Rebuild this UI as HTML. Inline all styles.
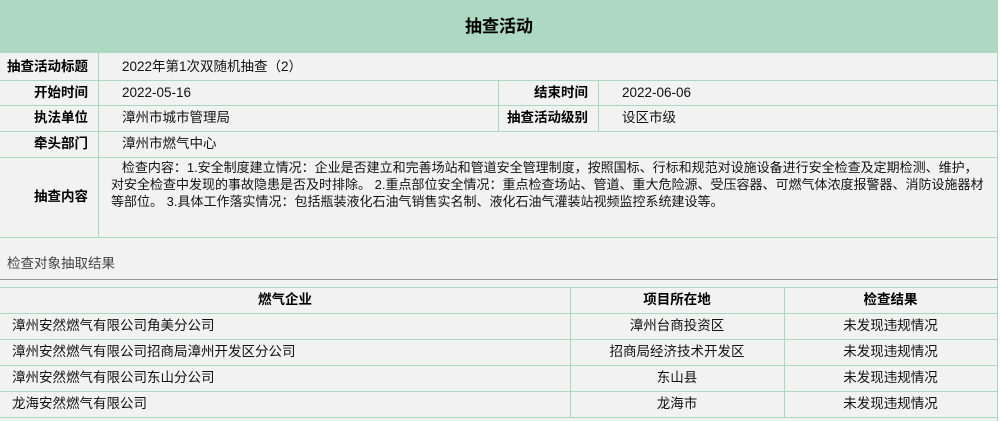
<!DOCTYPE html><html><head><meta charset="utf-8"><style>
body{margin:0;width:1001px;height:421px;background:#fff;font-family:"Liberation Sans","Noto Sans CJK SC",sans-serif;font-size:13.5px;color:#111;position:relative;overflow:hidden}
.bg{position:absolute;left:0;top:0;width:998px;height:421px;background:#f2f2f2}
.hd{position:absolute;left:0;top:0;width:998px;height:53px;background:#add9c2;text-align:center;line-height:53px;font-size:17px;font-weight:bold;color:#000}
.h{position:absolute;background:#a9d8bd;height:1px}
.v{position:absolute;background:#a9d8bd;width:1px}
.t{position:absolute;white-space:nowrap;line-height:26px}
.b{font-weight:bold;color:#000}
</style></head><body>
<div class="bg"></div>
<div class="hd">抽查活动</div>
<div class="h" style="left:0;top:80px;width:998px"></div>
<div class="h" style="left:0;top:105px;width:998px"></div>
<div class="h" style="left:0;top:131px;width:998px"></div>
<div class="h" style="left:0;top:157px;width:998px"></div>
<div class="h" style="left:0;top:237px;width:998px"></div>
<div class="v" style="left:98px;top:53px;height:184px"></div>
<div class="v" style="left:498px;top:80px;height:51px"></div>
<div class="v" style="left:598px;top:80px;height:51px"></div>
<div class="v" style="left:997px;top:53px;height:368px"></div>
<div class="t b" style="left:0;width:88px;text-align:right;top:54px">抽查活动标题</div>
<div class="t" style="left:122px;top:54px">2022年第1次双随机抽查（2）</div>
<div class="t b" style="left:0;width:88px;text-align:right;top:80px">开始时间</div>
<div class="t" style="left:122px;top:80px">2022-05-16</div>
<div class="t b" style="left:498px;width:90px;text-align:right;top:80px">结束时间</div>
<div class="t" style="left:622px;top:80px">2022-06-06</div>
<div class="t b" style="left:0;width:88px;text-align:right;top:105px">执法单位</div>
<div class="t" style="left:122px;top:105px">漳州市城市管理局</div>
<div class="t b" style="left:498px;width:90px;text-align:right;top:105px">抽查活动级别</div>
<div class="t" style="left:622px;top:105px">设区市级</div>
<div class="t b" style="left:0;width:88px;text-align:right;top:131px">牵头部门</div>
<div class="t" style="left:122px;top:131px">漳州市燃气中心</div>
<div class="t b" style="left:0;width:88px;text-align:right;top:184px">抽查内容</div>
<div style="position:absolute;left:111px;top:159px;white-space:nowrap;line-height:17px;font-size:13px">&nbsp;&nbsp;&nbsp;检查内容：1.安全制度建立情况：企业是否建立和完善场站和管道安全管理制度，按照国标、行标和规范对设施设备进行安全检查及定期检测、维护，<br>对安全检查中发现的事故隐患是否及时排除。 2.重点部位安全情况：重点检查场站、管道、重大危险源、受压容器、可燃气体浓度报警器、消防设施器材<br>等部位。 3.具体工作落实情况：包括瓶装液化石油气销售实名制、液化石油气灌装站视频监控系统建设等。</div>
<div class="t" style="left:7px;top:251px;color:#444">检查对象抽取结果</div>
<div style="position:absolute;left:0;top:279px;width:998px;height:1px;background:#999"></div>
<div class="h" style="left:0;top:287px;width:998px"></div>
<div class="h" style="left:0;top:313px;width:998px"></div>
<div class="h" style="left:0;top:339px;width:998px"></div>
<div class="h" style="left:0;top:365px;width:998px"></div>
<div class="h" style="left:0;top:391px;width:998px"></div>
<div class="h" style="left:0;top:417px;width:998px"></div>
<div class="v" style="left:570px;top:287px;height:130px"></div>
<div class="v" style="left:784px;top:287px;height:130px"></div>
<div class="t b" style="left:0;width:570px;text-align:center;top:287px">燃气企业</div>
<div class="t b" style="left:570px;width:214px;text-align:center;top:287px">项目所在地</div>
<div class="t b" style="left:784px;width:213px;text-align:center;top:287px">检查结果</div>
<div class="t" style="left:12px;top:313px">漳州安然燃气有限公司角美分公司</div>
<div class="t" style="left:570px;width:214px;text-align:center;top:313px">漳州台商投资区</div>
<div class="t" style="left:784px;width:213px;text-align:center;top:313px">未发现违规情况</div>
<div class="t" style="left:12px;top:339px">漳州安然燃气有限公司招商局漳州开发区分公司</div>
<div class="t" style="left:570px;width:214px;text-align:center;top:339px">招商局经济技术开发区</div>
<div class="t" style="left:784px;width:213px;text-align:center;top:339px">未发现违规情况</div>
<div class="t" style="left:12px;top:365px">漳州安然燃气有限公司东山分公司</div>
<div class="t" style="left:570px;width:214px;text-align:center;top:365px">东山县</div>
<div class="t" style="left:784px;width:213px;text-align:center;top:365px">未发现违规情况</div>
<div class="t" style="left:12px;top:391px">龙海安然燃气有限公司</div>
<div class="t" style="left:570px;width:214px;text-align:center;top:391px">龙海市</div>
<div class="t" style="left:784px;width:213px;text-align:center;top:391px">未发现违规情况</div>
</body></html>
